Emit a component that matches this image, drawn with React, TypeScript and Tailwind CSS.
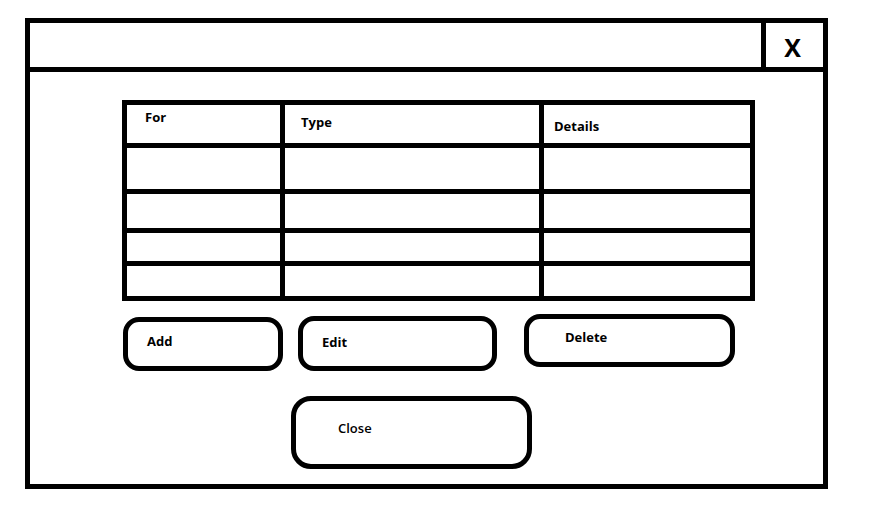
const columns = [
  { label: 'For', cell: 'w-[158px] border-r-[5px] pl-[18px] pt-[6px]' },
  { label: 'Type', cell: 'w-[259px] border-r-[5px] pl-[16px] pt-[11px]' },
  { label: 'Details', cell: 'flex-1 pl-[10px] pt-[15px]' }
]

const rows = ['h-[46px] border-b-[5px]', 'h-[39px] border-b-[5px]', 'h-[33px] border-b-[5px]', 'h-[30px]']

const SketchButton = ({ label, className }: { label: string; className: string }) => {
  return (
    <button
      type="button"
      className={`flex items-start border-[5px] border-black bg-white text-left text-[13px] leading-[13px] text-black ${className}`}
    >
      {label}
    </button>
  )
}

const App = () => {
  return (
    <div className="min-h-[505px] w-[882px] bg-white pl-[25px] pt-[18px] font-['Open_Sans',sans-serif] text-black">
      <div className="flex h-[471px] w-[803px] flex-col border-[5px] border-black">
        {/* title bar */}
        <div className="flex h-[49px] border-b-[5px] border-black">
          <div className="flex-1" />
          <div className="flex w-[62px] items-center justify-center border-l-[5px] border-black pr-[4px] pt-[5px] text-[25px] font-bold leading-none">
            X
          </div>
        </div>

        {/* body */}
        <div className="flex flex-col pl-[92px] pt-[28px]">
          <div className="flex w-[633px] flex-col border-[5px] border-black">
            <div className="flex h-[43px] border-b-[5px] border-black">
              {columns.map((col) => (
                <div key={col.label} className={`${col.cell} border-black text-[13px] font-bold leading-[13px]`}>
                  {col.label}
                </div>
              ))}
            </div>
            {rows.map((row, index) => (
              <div key={index} className={`flex border-black ${row}`}>
                <div className="w-[158px] border-r-[5px] border-black" />
                <div className="w-[259px] border-r-[5px] border-black" />
                <div className="flex-1" />
              </div>
            ))}
          </div>

          <div className="mt-[13px] flex items-start">
            <SketchButton
              label="Add"
              className="ml-px mt-[3px] h-[54px] w-[160px] rounded-[16px] pl-[19px] pt-[13px] font-bold"
            />
            <SketchButton
              label="Edit"
              className="ml-[15px] mt-[2px] h-[55px] w-[199px] rounded-[16px] pl-[19px] pt-[15px] font-bold"
            />
            <SketchButton
              label="Delete"
              className="ml-[27px] h-[53px] w-[211px] rounded-[16px] pl-[36px] pt-[12px] font-bold"
            />
          </div>

          <SketchButton
            label="Close"
            className="ml-[169px] mt-[25px] h-[73px] w-[241px] rounded-[20px] pl-[42px] pt-[21px] font-semibold"
          />
        </div>
      </div>
    </div>
  )
}

export default App
